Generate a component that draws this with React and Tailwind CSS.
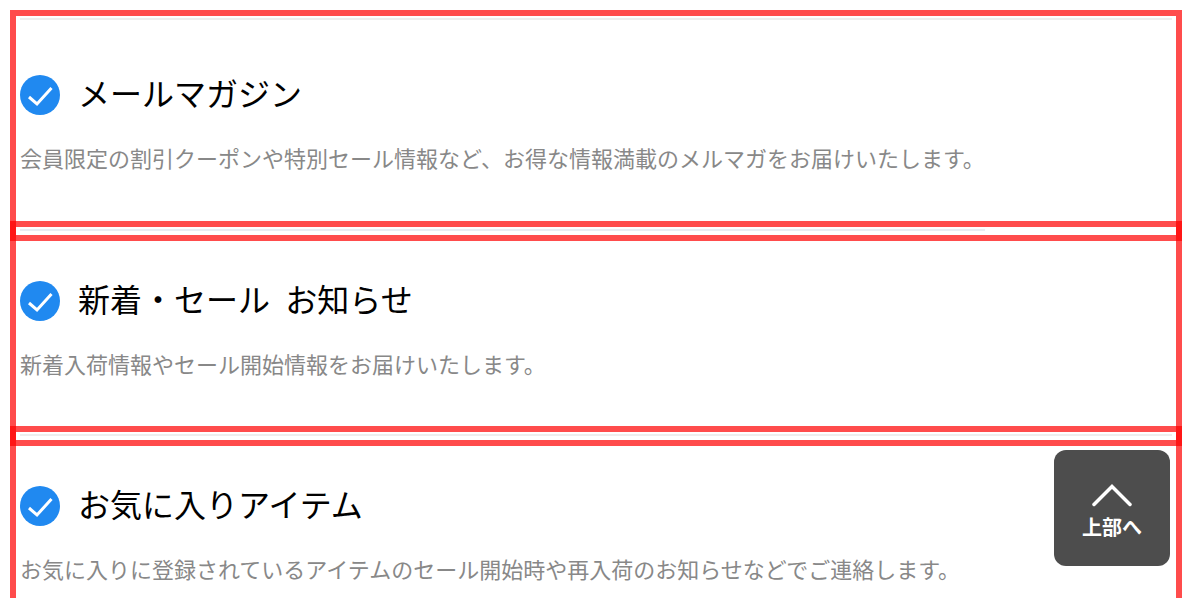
function Check() {
  return (
    <svg width="40" height="40" viewBox="0 0 40 40" className="shrink-0">
      <circle cx="20" cy="20" r="20" fill="#2089f0" />
      <polyline points="9,22 17,29 31.5,13" fill="none" stroke="#fff" strokeWidth="3" />
    </svg>
  );
}

function Section({ title, desc, sectionClass, lineClass, rowClass }) {
  return (
    <section className={`border-[6px] border-[#ff0000b3] px-1 ${sectionClass}`}>
      <div className={`mt-[2px] h-[2px] ${lineClass}`} />
      <div className={`flex h-10 items-center gap-[18px] ${rowClass}`}>
        <Check />
        <h2 className="mb-[6px] whitespace-pre text-[32px] leading-10 text-black [word-spacing:0.5px]">{title}</h2>
      </div>
      <p className="mt-[26px] whitespace-nowrap text-[22px] leading-8 text-[#888888]">{desc}</p>
    </section>
  );
}

export default function App() {
  return (
    <div className="relative h-[598px] w-[1192px] overflow-hidden bg-white px-[10px] pt-[10px] font-['Noto_Sans_CJK_JP','Noto_Sans',sans-serif]">
      <Section
        title="メールマガジン"
        desc="会員限定の割引クーポンや特別セール情報など、お得な情報満載のメルマガをお届けいたします。"
        sectionClass="h-[231px]"
        lineClass="w-[1152px] bg-[#eeeeee]"
        rowClass="mt-[55px]"
      />
      <Section
        title="新着・セール  お知らせ"
        desc="新着入荷情報やセール開始情報をお届けいたします。"
        sectionClass="-mt-[20px] h-[225px]"
        lineClass="w-[965px] bg-[#e9edf3]"
        rowClass="mt-[50px]"
      />
      <Section
        title="お気に入りアイテム"
        desc="お気に入りに登録されているアイテムのセール開始時や再入荷のお知らせなどでご連絡します。"
        sectionClass="-mt-[20px] h-[240px]"
        lineClass="w-[1152px] bg-[#eeeeee]"
        rowClass="mt-[50px]"
      />
      <button className="absolute left-[1054px] top-[450px] flex h-[116px] w-[116px] flex-col items-center rounded-xl bg-[#4d4d4d] text-white">
        <svg width="40" height="24" viewBox="0 0 40 24" className="mt-[33px]">
          <polyline points="2,21.5 20,3.5 38,21.5" fill="none" stroke="#fff" strokeWidth="3.5" strokeLinecap="round" />
        </svg>
        <span className="mt-[6px] text-[20px] font-bold leading-7">上部へ</span>
      </button>
    </div>
  );
}
